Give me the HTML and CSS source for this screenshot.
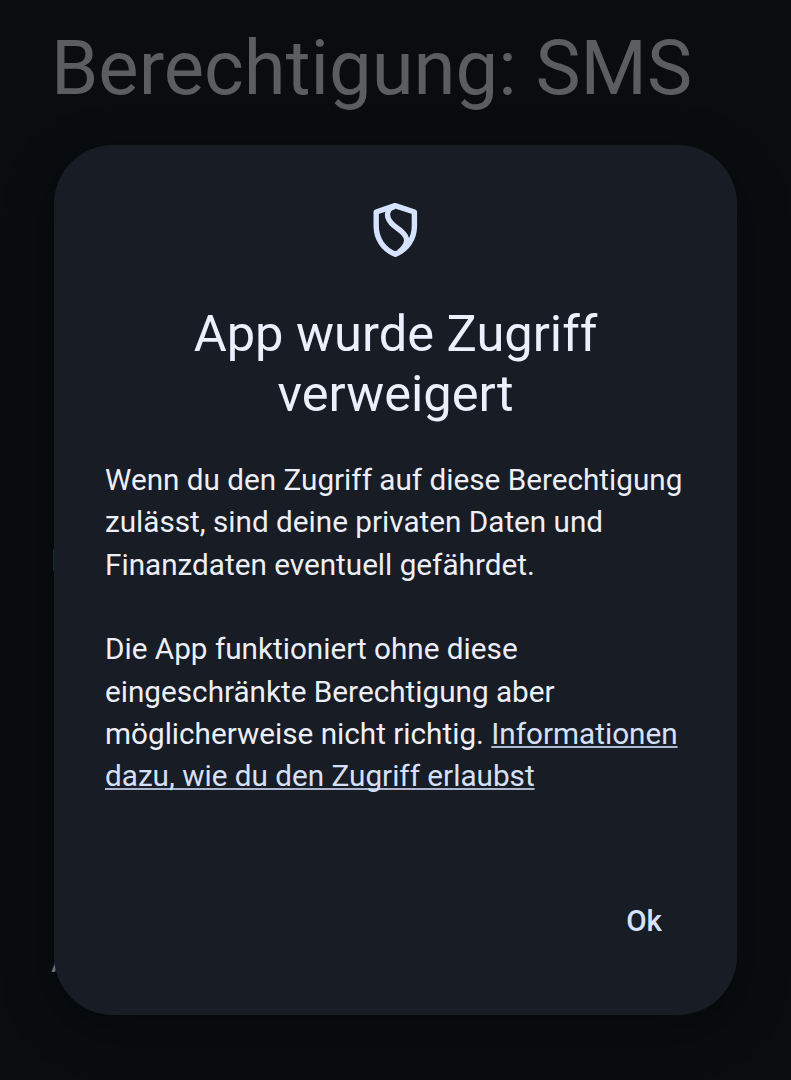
FILE: index.html
```html
<!DOCTYPE html>
<html lang="de">
<head>
	<meta charset="utf-8">
	<title>Berechtigung: SMS</title>
	<link rel="stylesheet" href="styles.css">
</head>

<body>
<div class="page">
	<h1 class="page-title">Berechtigung: SMS</h1>
	<div class="accent"></div>
	<div class="row">A</div>
</div>

<div class="overlay">
<div class="dialog" role="dialog" aria-labelledby="dialog-title">
	<svg class="shield" viewBox="0 0 46 56" width="47" height="56">
		<path d="M22.5 3.6 L41.9 10 V24 C41.9 37 34.5 47.5 22.8 52.2 C11 47.5 3.7 37 3.7 24 V10 Z"/>
		<path d="M22 4.5 C17 5.5 15 9 15 12.5 C15 17 17.8 20.5 21.5 23.7 L28.5 29 C32.5 32.5 34.5 35.5 34.2 39 C33.5 43.5 31 47 26.5 50"/>
	</svg>
	<h2 class="dialog-title" id="dialog-title">App wurde Zugriff<br>verweigert</h2>
	<div class="message">
		Wenn du den Zugriff auf diese Berechtigung<br>
		zulässt, sind deine privaten Daten und<br>
		Finanzdaten eventuell gefährdet.<br>
		<br>
		Die App funktioniert ohne diese<br>
		eingeschränkte Berechtigung aber<br>
		möglicherweise nicht richtig. <a href="#">Informationen<br>
		dazu, wie du den Zugriff erlaubst</a>
	</div>
	<div class="buttons">
		<button type="button" class="ok">Ok</button>
	</div>
</div>
</div>
</body>
</html>
```

FILE: styles.css
```css
*{box-sizing:border-box;}
body{margin:0;height:1080px;overflow:hidden;background-color:#090d10;font-family:Roboto, "Liberation Sans", sans-serif;}

.page{height:1080px;padding:23px 0 0 48px;color:#5b5d60;}
.page-title{margin:0 0 0 3px;font-size:76px;line-height:90px;font-weight:400;white-space:nowrap;}
.accent{width:20px;height:22px;margin:436px 0 0 5px;background-color:#123c44;}
.row{margin:369px 0 0 3px;font-size:34px;line-height:40px;color:#85878a;}

/* dialog over the dimmed page */
.overlay{position:absolute;top:0;left:0;width:791px;height:1080px;padding:145px 54px 65px;}
.dialog{display:flex;flex-direction:column;height:870px;padding:57px 51px 60px;border-radius:59px;background-color:#181c24;box-shadow:0 14px 50px rgba(0,0,0,.35);}

.shield{align-self:center;flex:none;fill:none;stroke:#d5e3ff;stroke-width:5.4;stroke-linejoin:round;}
.dialog-title{margin:46px 0 0;color:#eceffc;font-size:50.6px;line-height:59.5px;font-weight:400;text-align:center;white-space:nowrap;}

.message{margin-top:36px;color:#eceef8;font-size:29.7px;line-height:42.33px;white-space:nowrap;}
.message a{color:#d5e1fb;text-decoration:underline;text-decoration-color:#adb7cf;text-decoration-thickness:2px;text-underline-offset:2px;text-decoration-skip-ink:none;}

.buttons{display:flex;justify-content:flex-end;margin-top:auto;}
.ok{margin-right:24px;padding:0;border:0;background:none;color:#d5e3ff;font-family:inherit;font-size:29.6px;line-height:68px;font-weight:500;}
```
